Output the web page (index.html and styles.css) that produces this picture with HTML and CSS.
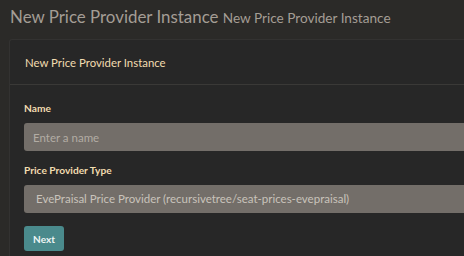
FILE: index.html
```html
<!DOCTYPE html>
<html>
<head>
<title>New Price Provider Instance</title>
<link rel="stylesheet" href="styles.css">
</head>
<body>
    <div class="content-header">
        <h1>New Price Provider Instance <small>New Price Provider Instance</small></h1>
    </div>

    <div class="card">
        <div class="card-header">
            <h3 class="card-title">New Price Provider Instance</h3>
        </div>
        <div class="card-body">
            <form>
                <div class="form-group">
                    <label for="name">Name</label>
                    <input type="text" id="name" class="form-control" placeholder="Enter a name">
                </div>
                <div class="form-group">
                    <label for="type">Price Provider Type</label>
                    <div class="form-control select">EvePraisal Price Provider (recursivetree/seat-prices-evepraisal)</div>
                </div>
                <button type="submit" class="btn">Next</button>
            </form>
        </div>
    </div>
</body>
</html>
```

FILE: styles.css
```css
html, body {
    margin: 0;
    background: #2b2a28;
    overflow: hidden;
    font-family: Lato, "Open Sans", sans-serif;
}

.content-header {
    padding: 4px 10px 0 10px;
    height: 35px;
}

.content-header h1 {
    margin: 0;
    font-size: 16.9px;
    font-weight: normal;
    color: #a49d95;
    line-height: 26px;
    white-space: nowrap;
}

.content-header small {
    font-size: 13.6px;
    color: #a49d95;
}

.card {
    margin-left: 9px;
    width: 455px;
    background: #272727;
    border-top: 1px solid #333231;
    border-left: 1px solid #333231;
    border-radius: 3px 0 0 0;
}

.card-header {
    height: 44px;
    display: flex;
    align-items: center;
    padding-left: 15px;
    border-bottom: 1px solid #3a3937;
}

.card-title {
    margin: 0;
    font-size: 11.4px;
    font-weight: normal;
    color: #f2dcb0;
}

.card-body {
    padding: 17px 0 14px 14px;
}

.form-group {
    margin-bottom: 13px;
}

label {
    display: block;
    font-size: 10.2px;
    font-weight: bold;
    color: #f2dcb0;
    margin-bottom: 9px;
}

.form-control {
    display: block;
    box-sizing: border-box;
    width: 100%;
    height: 28px;
    border: none;
    border-radius: 3px 0 0 3px;
    background: #736e69;
    color: #c9c3bb;
    font-family: inherit;
    font-size: 11.5px;
    padding: 0 9px;
    outline: none;
}

.form-control::placeholder {
    color: #b2aca4;
}

.select {
    line-height: 28px;
    padding-left: 12px;
    white-space: nowrap;
}

.btn {
    width: 40px;
    height: 25px;
    border: none;
    border-radius: 3px;
    background: #4a8a8c;
    color: #eef6f6;
    font-family: inherit;
    font-size: 10px;
    font-weight: bold;
    padding: 0;
}
```
